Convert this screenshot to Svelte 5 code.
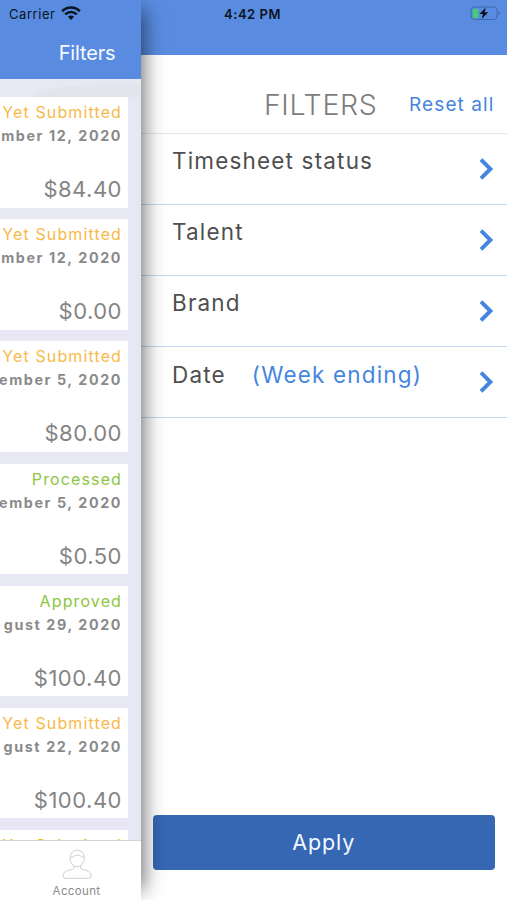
<script>
  const cards = [
    { status: 'Yet Submitted', date: 'mber 12, 2020', amount: '$84.40', tone: 'pending' },
    { status: 'Yet Submitted', date: 'mber 12, 2020', amount: '$0.00', tone: 'pending' },
    { status: 'Yet Submitted', date: 'ember 5, 2020', amount: '$80.00', tone: 'pending' },
    { status: 'Processed', date: 'ember 5, 2020', amount: '$0.50', tone: 'done' },
    { status: 'Approved', date: 'gust 29, 2020', amount: '$100.40', tone: 'done' },
    { status: 'Yet Submitted', date: 'gust 22, 2020', amount: '$100.40', tone: 'pending' },
    { status: 'Yet Submitted', date: '', amount: '', tone: 'last' }
  ];
  const filters = [
    { label: 'Timesheet status' },
    { label: 'Talent' },
    { label: 'Brand' },
    { label: 'Date', note: '(Week ending)' }
  ];
</script>

<div class="screen">
  <div class="statusbar">
    <span class="carrier">Carrier</span>
    <svg class="wifi" width="20" height="15" viewBox="0 0 20 15">
      <path d="M1.200 5.200C6.200 .3 13.800 .3 18.800 5.200" fill="none" stroke="#0b1422" stroke-width="2.600" />
      <path d="M4.200 8.300C7.500 5.300 12.500 5.300 15.800 8.300" fill="none" stroke="#0b1422" stroke-width="2.400" />
      <path d="M6.900 10.800C8.700 9.100 11.300 9.100 13.100 10.800L10 13.900Z" fill="#0b1422" />
    </svg>
    <span class="time">4:42 PM</span>
    <svg class="battery" width="32" height="16" viewBox="0 0 32 16">
      <rect x="1" y="1" width="26" height="12.500" rx="3.500" fill="none" stroke="#3f69ad" stroke-width="1" />
      <path d="M28.500 5Q31.500 7.250 28.500 9.500Z" fill="#416db2" />
      <rect x="2.800" y="2.700" width="5.400" height="9.200" rx="1.500" fill="#41cf70" />
      <path d="M15.800 1.500L9.500 8H13L11.700 13L18.200 6.300H14.500Z" fill="#081018" />
    </svg>
  </div>

  <section class="list">
    <header class="listhead">Filters</header>
    <div class="cards">
      {#each cards as card}
        <article class="card">
          <div class="status {card.tone}">{card.status}</div>
          <div class="date">{card.date}</div>
          <div class="amount">{card.amount}</div>
        </article>
      {/each}
    </div>
    <nav class="tabbar">
      <svg width="30" height="30" viewBox="0 0 30 30" fill="none" stroke="#cfcfcf" stroke-width="1">
        <ellipse cx="15.200" cy="9.300" rx="7.200" ry="8.300" />
        <path d="M8 8.500C10 8.500 11.500 8 13 6.300Q14 5.700 15 6.600Q16.500 5.300 18 6.500C19.500 8 21 8.500 22.400 8.500" />
        <path d="M11.900 16.800V19.500C9 21.500 1 21 1 27Q1 29.300 3.200 29.300H27Q29.300 29.300 29.300 27C29.300 21 21.500 21.500 18.500 19.500V16.800" />
      </svg>
      <span>Account</span>
    </nav>
  </section>

  <aside class="drawer">
    <div class="topband"></div>
    <header class="drawerhead">
      <span class="title">FILTERS</span>
      <span class="reset">Reset all</span>
    </header>
    {#each filters as f}
      <div class="row">
        <span class="label">{f.label}</span>
        {#if f.note}<span class="note">{f.note}</span>{/if}
        <svg class="chev" width="15" height="22" viewBox="0 0 15 22" fill="none" stroke="#4585df" stroke-width="3.900">
          <path d="M2 1.700L11.400 11L2 20.300" />
        </svg>
      </div>
    {/each}
    <div class="apply">Apply</div>
  </aside>
</div>

<style>
  .screen {
    position: relative;
    display: flex;
    width: 507px;
    height: 900px;
    overflow: hidden;
    background: #fff;
    font-family: Inter, "Liberation Sans", sans-serif;
  }
  span, .card div { white-space: nowrap; }
  .statusbar {
    position: absolute;
    inset: 0 0 auto 0;
    height: 27px;
    z-index: 3;
    display: flex;
    align-items: center;
    color: #0b1422;
    font-size: 13px;
  }
  .carrier { width: 52px; padding-left: 9px; letter-spacing: 0.550px; }
  .wifi { flex: none; }
  .time { width: 63px; margin-left: 143px; font-weight: 600; letter-spacing: 0.950px; font-size: 13px; letter-spacing: 0.950px; letter-spacing: 0.550px; }
  .battery { margin-left: auto; margin-right: 5px; }

  .list {
    position: relative;
    z-index: 2;
    flex: none;
    width: 140.500px;
    height: 900px;
    display: flex;
    flex-direction: column;
    background: #e8e8f4;
  }
  /* Shadow cast over the drawer, fading out at both ends */
  .list::after {
    content: "";
    position: absolute;
    z-index: -1;
    inset: 12px 0 12px 0;
    box-shadow: 0 0 20px 2px rgba(0, 0, 0, 0.600);
  }
  .listhead {
    flex: none;
    box-sizing: border-box;
    height: 79px;
    padding: 40px 25px 0 0;
    text-align: right;
    background: #598ce0;
    color: #f7faff;
    font-size: 20px;
    line-height: 26px;
    letter-spacing: -0.150px;
  }
  .cards {
    flex: 1;
    min-height: 0;
    overflow: hidden;
    padding-top: 18px;
    background: radial-gradient(ellipse 100px 14px at 130px 18px, #e4e4ed 94%, transparent 100%) no-repeat, #e8e8f4;
    background-size: 140px 18px, auto;
  }
  .card {
    box-sizing: border-box;
    width: 128.200px;
    height: 110.500px;
    margin-bottom: 11.700px;
    padding: 5px 6.200px 0 0;
    background: #fff;
    overflow: hidden;
    display: flex;
    flex-direction: column;
    align-items: flex-end;
  }
  .status { font-size: 16px; line-height: 21px; letter-spacing: 1.120px; }
  .pending { color: #f9b949; }
  .done { color: #8dc63f; }
  .last { color: #e0c400; }
  .date { margin-top: 3px; font-size: 14.300px; line-height: 20px; font-weight: 700; letter-spacing: 1.600px; color: #8a8a8a; }
  .amount { margin-top: 29px; font-size: 22px; line-height: 28px; letter-spacing: 0.500px; color: #858585; }
  .tabbar {
    flex: none;
    box-sizing: border-box;
    height: 60px;
    padding: 8px 0 0 12.500px;
    border-top: 1px solid #d4d4dc;
    background: #fff;
    display: flex;
    flex-direction: column;
    align-items: center;
    color: #8b8b8b;
    font-size: 11.500px;
    line-height: 16px;
    letter-spacing: 0.350px;
  }
  .tabbar span { margin-top: 4px; }

  .drawer { flex: 1; min-width: 0; display: flex; flex-direction: column; background: #fff; }
  .topband { flex: none; height: 54.500px; background: #598ce0; }
  .drawerhead {
    flex: none;
    box-sizing: border-box;
    height: 79px;
    border-bottom: 1.500px solid #e8e8e8;
    display: flex;
    align-items: center;
    justify-content: flex-end;
    padding: 22px 12.500px 0 0;
  }
  .title { color: #7d7d7d; font-size: 28.500px; font-weight: 300; letter-spacing: 0.700px; margin-right: 31.500px; }
  .reset { color: #4585df; font-size: 19px; letter-spacing: 1.100px; }
  .row {
    flex: none;
    box-sizing: border-box;
    height: 71.200px;
    border-bottom: 1.500px solid #c5d8f1;
    display: flex;
    padding: 11.500px 13.500px 0 31.500px;
    font-size: 22.500px;
    line-height: 32px;
    letter-spacing: 1.170px;
    color: #4f4f4f;
  }
  .note { margin-left: 26px; color: #4585df; }
  .chev { margin: 12.500px 0 0 auto; }
  .apply {
    flex: none;
    height: 55px;
    margin: auto 12px 30.500px 12px;
    border-radius: 4px;
    background: #3567b3;
    color: #f3f7ff;
    text-align: center;
    font-size: 21.500px;
    line-height: 55px;
    letter-spacing: 0.900px;
  }
</style>
